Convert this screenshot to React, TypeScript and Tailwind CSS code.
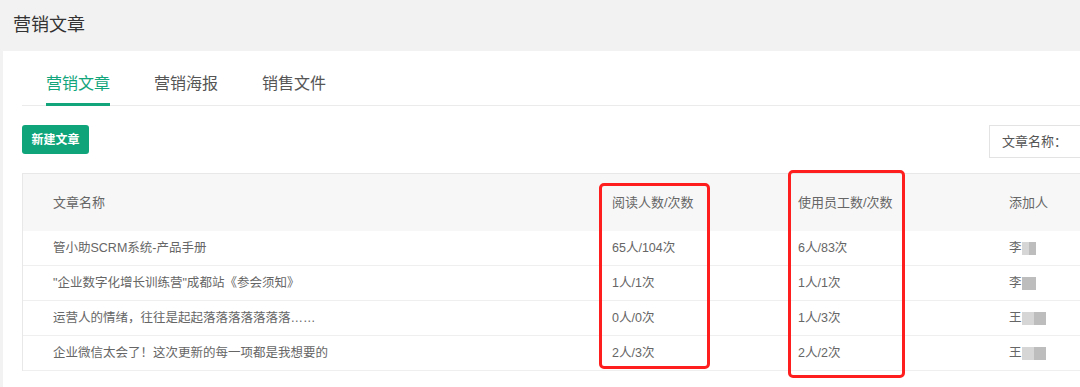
import React from "react";

interface Article {
  name: string;
  reads: string;
  uses: string;
  author: string;
  blur: number[]; // widths of the masked name blocks
}

const articles: Article[] = [
  { name: "管小助SCRM系统-产品手册", reads: "65人/104次", uses: "6人/83次", author: "李", blur: [7, 7] },
  { name: "\"企业数字化增长训练营\"成都站《参会须知》", reads: "1人/1次", uses: "1人/1次", author: "李", blur: [14] },
  { name: "运营人的情绪，往往是起起落落落落落落落……", reads: "0人/0次", uses: "1人/3次", author: "王", blur: [12, 12] },
  { name: "企业微信太会了！这次更新的每一项都是我想要的", reads: "2人/3次", uses: "2人/2次", author: "王", blur: [12, 12] },
];

const tabs = ["营销文章", "营销海报", "销售文件"];

const font = "font-['Liberation_Sans','Noto_Sans_CJK_SC',sans-serif]";

const App: React.FC = () => {
  return (
    <div className={`w-[1080px] h-[387px] overflow-hidden bg-[#f2f2f2] ${font}`}>
      {/* page title */}
      <div className="h-[51px] flex items-center pl-[13px] text-[18px] text-[#333]">营销文章</div>

      <div className="ml-[3px] bg-white h-[336px] pl-[19px]">
        {/* tabs */}
        <div className="flex border-b border-[#ebebeb] pt-[21px] pl-[2px]">
          {tabs.map((t, i) => (
            <div key={t} className="px-[22px]">
              <div
                className={`text-[16px] leading-[24px] pb-[7px] border-b-[3px] mb-[-1px] ${
                  i === 0 ? "text-[#12a57b] border-[#12a57b]" : "text-[#555] border-transparent"
                }`}
              >
                {t}
              </div>
            </div>
          ))}
        </div>

        {/* toolbar */}
        <div className="flex items-start justify-between mt-[19px]">
          <button className="w-[67px] h-[29px] rounded-[3px] bg-[#0fa47a] text-white text-[12px] font-bold">
            新建文章
          </button>
          <div className="w-[91px] h-[33px] border border-[#e3e3e3] border-r-0 flex items-center pl-[12px] text-[13px] text-[#555] whitespace-nowrap">
            文章名称：
          </div>
        </div>

        {/* table */}
        <div className="relative mt-[15px] border-t border-l border-[#e8e8e8] text-[12.5px] text-[#666]">
          <div className="grid grid-cols-[559px_186px_211px_1fr] h-[57px] items-center bg-[#f7f7f7] text-[13px]">
            <div className="pl-[30px]">文章名称</div>
            <div className="pl-[30px]">阅读人数/次数</div>
            <div className="pl-[30px]">使用员工数/次数</div>
            <div className="pl-[30px]">添加人</div>
          </div>
          {articles.map((a) => (
            <div
              key={a.name}
              className="grid grid-cols-[559px_186px_211px_1fr] h-[35px] items-center border-b border-[#efefef]"
            >
              <div className="pl-[30px] whitespace-nowrap">{a.name}</div>
              <div className="pl-[30px]">{a.reads}</div>
              <div className="pl-[30px]">{a.uses}</div>
              <div className="pl-[30px] flex items-center">
                <span>{a.author}</span>
                {a.blur.map((w, j) => (
                  <span
                    key={j}
                    className={`h-[13px] blur-[0.5px] ${j === a.blur.length - 1 ? "bg-[#bdbdbd]" : "bg-[#d6d6d6]"}`}
                    style={{ width: w }}
                  />
                ))}
              </div>
            </div>
          ))}

          {/* annotation boxes */}
          <div className="absolute left-[576px] top-[9px] w-[111px] h-[186px] border-[3px] border-[#ff1e1e] rounded-[5px]" />
          <div className="absolute left-[765px] top-[-4px] w-[117px] h-[208px] border-[3px] border-[#ff1e1e] rounded-[5px]" />
        </div>
      </div>
    </div>
  );
};

export default App;
